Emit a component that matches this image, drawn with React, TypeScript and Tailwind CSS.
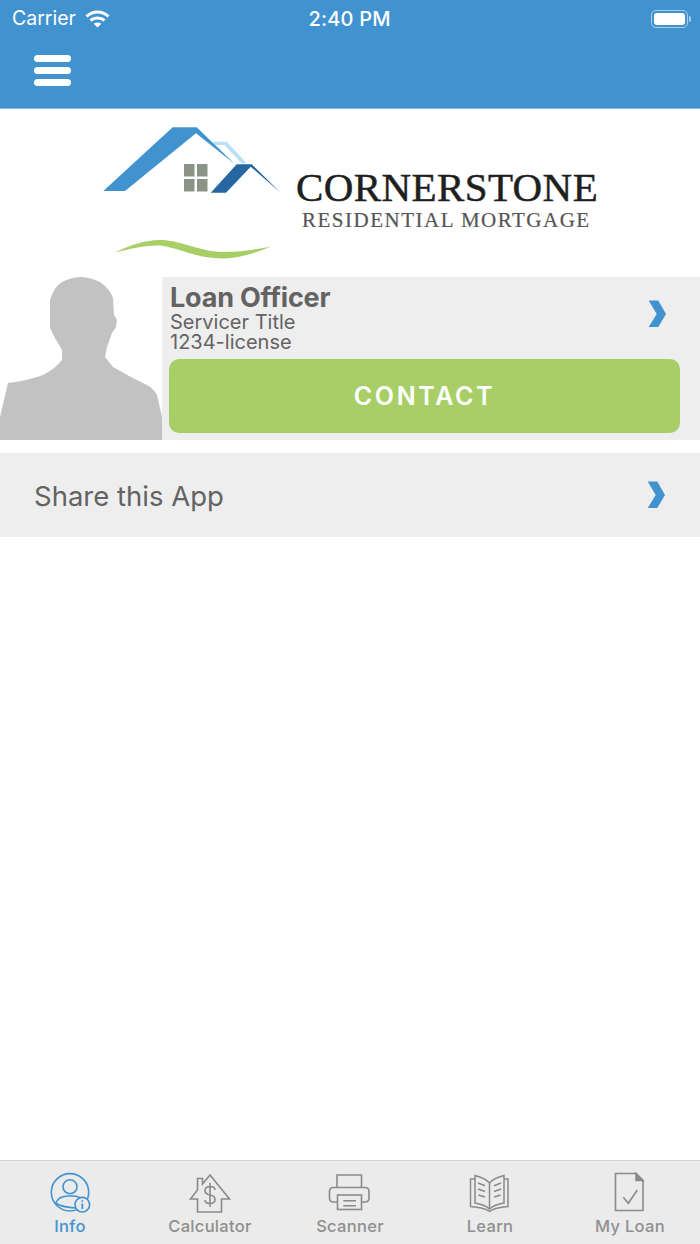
import React from 'react';

const Chevron = () => (
  <svg width="18" height="28" viewBox="0 0 18 28" className="block">
    <polygon points="0.7,0.5 10.3,0.5 18,14 10.3,27 0.7,27 8.7,14" fill="#4193d0" />
  </svg>
);

const Logo = () => (
  <svg width="180" height="136" viewBox="103 125 180 136" className="block shrink-0">
    <polygon points="103.3,191 172.7,127.3 196.7,127.3 235,164.3 196,133.3 125,191" fill="#4193d0" />
    <polygon points="211.7,141.7 226.7,141.7 246.7,163.3 241.5,163.3 224.5,145 216,145" fill="#b9e0f7" />
    <polygon points="210.7,192.7 236.7,164.3 251.7,164.3 280.7,192.7 250.7,166.7 226,192.7" fill="#2566a3" />
    <rect x="184" y="164" width="10.5" height="12.5" fill="#8a9486" />
    <rect x="197" y="164" width="10.5" height="12.5" fill="#8a9486" />
    <rect x="184" y="179" width="10.5" height="12.5" fill="#8a9486" />
    <rect x="197" y="179" width="10.5" height="12.5" fill="#8a9486" />
    <path
      d="M115 252.5C130 245 145 240 160 240C180 240 195 250 220 252C240 252.5 258 249 271 246.5C258 252 240 258.5 222 258.5C195 258 180 248 160 245.5C145 245 130 249 115 252.5Z"
      fill="#a7cf65"
    />
  </svg>
);

const Avatar = () => (
  <svg width="162" height="163" viewBox="0 0 162 163" className="block shrink-0">
    <path
      d="M0 163L0 140L8 106Q30 103 43 98Q55 92 62 83L62 73Q55 62 50 51L50 23Q54 10 62 5Q72 0 82 0Q92 1 100 5Q110 12 113 21L114 38L117 43L116 50L112 56L107 70L105 80L113 90Q130 100 147 108Q154 112 157 118L162 140L162 163Z"
      fill="#c2c2c2"
    />
  </svg>
);

const InfoIcon = () => (
  <svg width="44" height="44" viewBox="0 0 44 44" fill="none" stroke="#4193d0" strokeWidth="1.6" className="block">
    <circle cx="22" cy="22.3" r="18.7" />
    <circle cx="22" cy="16.7" r="7" />
    <path d="M7.5 33C10 28 15 26 20 26H25C28 26 31 27 33 28" />
    <path d="M7.5 33C12 36 16 37.5 27.5 38" />
    <circle cx="34.3" cy="34.7" r="7.3" fill="#ebebeb" />
    <path d="M34.3 33.5V39M34.3 30.2V31.8" strokeWidth="1.8" />
  </svg>
);

const CalculatorIcon = () => (
  <svg width="44" height="44" viewBox="0 0 44 44" fill="none" stroke="#8a8a8a" strokeWidth="1.6" className="block">
    <path d="M2.5 29L9.5 20V8.5H14.5V14L22 5L41.5 29H33.5V42H9.5V29H2.5Z" />
    <path d="M27 20C27 17 24.5 16.5 22 16.5C19 16.5 17 18 17 20.5C17 23.5 19.5 24.5 22 25C25 25.5 27 26.5 27 29.5C27 32 25 33.5 22 33.5C19 33.5 17 32.5 17 30M22 13V37" />
  </svg>
);

const ScannerIcon = () => (
  <svg width="44" height="44" viewBox="0 0 44 44" fill="none" stroke="#8a8a8a" strokeWidth="1.6" className="block">
    <path d="M9 17.5V5H33.5V17.5" />
    <path d="M9.5 32H5.5Q1.5 32 1.5 28V21.5Q1.5 17.5 5.5 17.5H37Q41 17.5 41 21.5V28Q41 32 37 32H33.5" />
    <rect x="9.5" y="25" width="24" height="14.5" />
    <path d="M15.3 30.7H28M15.3 35.7H28" />
  </svg>
);

const LearnIcon = () => (
  <svg width="44" height="44" viewBox="0 0 44 44" fill="none" stroke="#8a8a8a" strokeWidth="1.5" className="block">
    <path d="M21.5 13C18 9 13 7 7 5.5V33C13 34 18 36 21.5 39" />
    <path d="M21.5 13C25 9 30 7 36 5.5V33C30 34 25 36 21.5 39V13" />
    <path d="M7 9H2.5V36.5C10 37 17 38 21.5 41.5C26 38 33 37 40 36.5V9H36" />
    <path d="M10 13L17 15.7M10 19L17 21.5M10.5 25L17 27" />
    <path d="M33 13L26 15.7M33 19L26 21.5M32.5 25L26 27" />
  </svg>
);

const LoanIcon = () => (
  <svg width="44" height="44" viewBox="0 0 44 44" fill="none" stroke="#8a8a8a" strokeWidth="1.6" className="block">
    <path d="M7.5 3.5H28L35 10.5V40.5H7.5V3.5Z" />
    <path d="M28 3.5V10.5H35Z" fill="#8a8a8a" />
    <path d="M15.3 27.3L20.3 33.3L29.3 20" />
  </svg>
);

const tabs = [
  { label: 'Info', icon: <InfoIcon />, active: true },
  { label: 'Calculator', icon: <CalculatorIcon />, active: false },
  { label: 'Scanner', icon: <ScannerIcon />, active: false },
  { label: 'Learn', icon: <LearnIcon />, active: false },
  { label: 'My Loan', icon: <LoanIcon />, active: false },
];

const App: React.FC = () => {
  return (
    <div className="w-[700px] h-[1244px] bg-white flex flex-col overflow-hidden font-['Inter','Liberation_Sans',sans-serif]">
      {/* Header */}
      <header className="h-[109px] shrink-0 bg-[#4193d0] border-b border-[#86b8df] text-white">
        <div className="h-[37px] pl-3 pr-[9px] flex items-center justify-between">
          <div className="flex items-center gap-[9px] w-[196px]">
            <span className="text-[19.5px] leading-none font-normal">Carrier</span>
            <svg width="25" height="18" viewBox="0 0 25 18" fill="none" stroke="#fff" strokeWidth="3">
              <path d="M1.5 6.5C8 0.5 17 0.5 23.5 6.5" />
              <path d="M5.5 10.5C9.5 7 15.5 7 19.5 10.5" />
              <path d="M12.5 17.5L8.7 13.8C11 12 14 12 16.3 13.8Z" fill="#fff" stroke="none" />
            </svg>
          </div>
          <span className="text-[20px] leading-none font-medium tracking-[0.2px]">2:40 PM</span>
          <div className="w-[200px] flex justify-end items-center">
            <div className="w-[37px] h-[18px] rounded-[5px] border-[1.5px] border-[#a9cdea] p-[2px]">
              <div className="w-full h-full rounded-[3px] bg-white" />
            </div>
            <div className="w-[2px] h-[6px] ml-[1px] rounded-r-sm bg-[#a9cdea]" />
          </div>
        </div>
        <div className="pl-[34px] pt-[18px] flex flex-col gap-[5px]">
          <div className="w-[37px] h-[7px] rounded-full bg-white" />
          <div className="w-[37px] h-[7px] rounded-full bg-white" />
          <div className="w-[37px] h-[7px] rounded-full bg-white" />
        </div>
      </header>

      {/* Logo */}
      <div className="h-[168px] shrink-0 flex items-start pl-[103px] pt-[16px]">
        <Logo />
        <div className="ml-[13px] pt-[40px] flex flex-col items-start font-['Liberation_Serif',serif]">
          <span className="text-[41px] leading-[45px] text-[#1f1f1f] tracking-[0.4px] whitespace-nowrap [-webkit-text-stroke:0.5px_#1f1f1f]">CORNERSTONE</span>
          <span className="text-[21px] leading-[20px] ml-[6px] text-[#555555] tracking-[1.5px] whitespace-nowrap [-webkit-text-stroke:0.2px_#555555]">RESIDENTIAL MORTGAGE</span>
        </div>
      </div>

      {/* Loan officer */}
      <div className="h-[163px] shrink-0 flex">
        <Avatar />
        <div className="flex-1 bg-[#eeeeee] pl-[7px] pr-5 pt-[6px]">
          <div className="flex items-start justify-between">
            <div className="text-[#636363] pl-px">
              <div className="text-[27px] leading-[29px] font-bold tracking-[-0.2px]">Loan Officer</div>
              <div className="text-[20px] leading-[20px]">Servicer Title</div>
              <div className="text-[20px] leading-[20px]">1234-license</div>
            </div>
            <div className="pt-[17px] mr-[14px]">
              <Chevron />
            </div>
          </div>
          <button className="mt-[7px] w-full h-[74px] pt-[2px] rounded-[10px] bg-[#a8cf67] text-white text-[25px] font-semibold tracking-[0.105em]">
            CONTACT
          </button>
        </div>
      </div>

      {/* Share */}
      <div className="mt-[13px] h-[84px] shrink-0 bg-[#eeeeee] flex items-center justify-between pl-[34px] pr-[35px]">
        <span className="text-[27.5px] leading-[36px] pt-[2px] text-[#636363]">Share this App</span>
        <Chevron />
      </div>

      <div className="flex-1" />

      {/* Tab bar */}
      <nav className="h-[84px] shrink-0 bg-[#ebebeb] border-t border-[#d2d2d2] grid grid-cols-5 pt-[9px]">
        {tabs.map((t) => (
          <div key={t.label} className="flex flex-col items-center">
            {t.icon}
            <span className={t.active ? 'text-[16.5px] leading-[20px] mt-[2px] font-medium tracking-[0.3px] text-[#4193d0]' : 'text-[16.5px] leading-[20px] mt-[2px] font-medium tracking-[0.3px] text-[#8f8f8f]'}>
              {t.label}
            </span>
          </div>
        ))}
      </nav>
    </div>
  );
};

export default App;
